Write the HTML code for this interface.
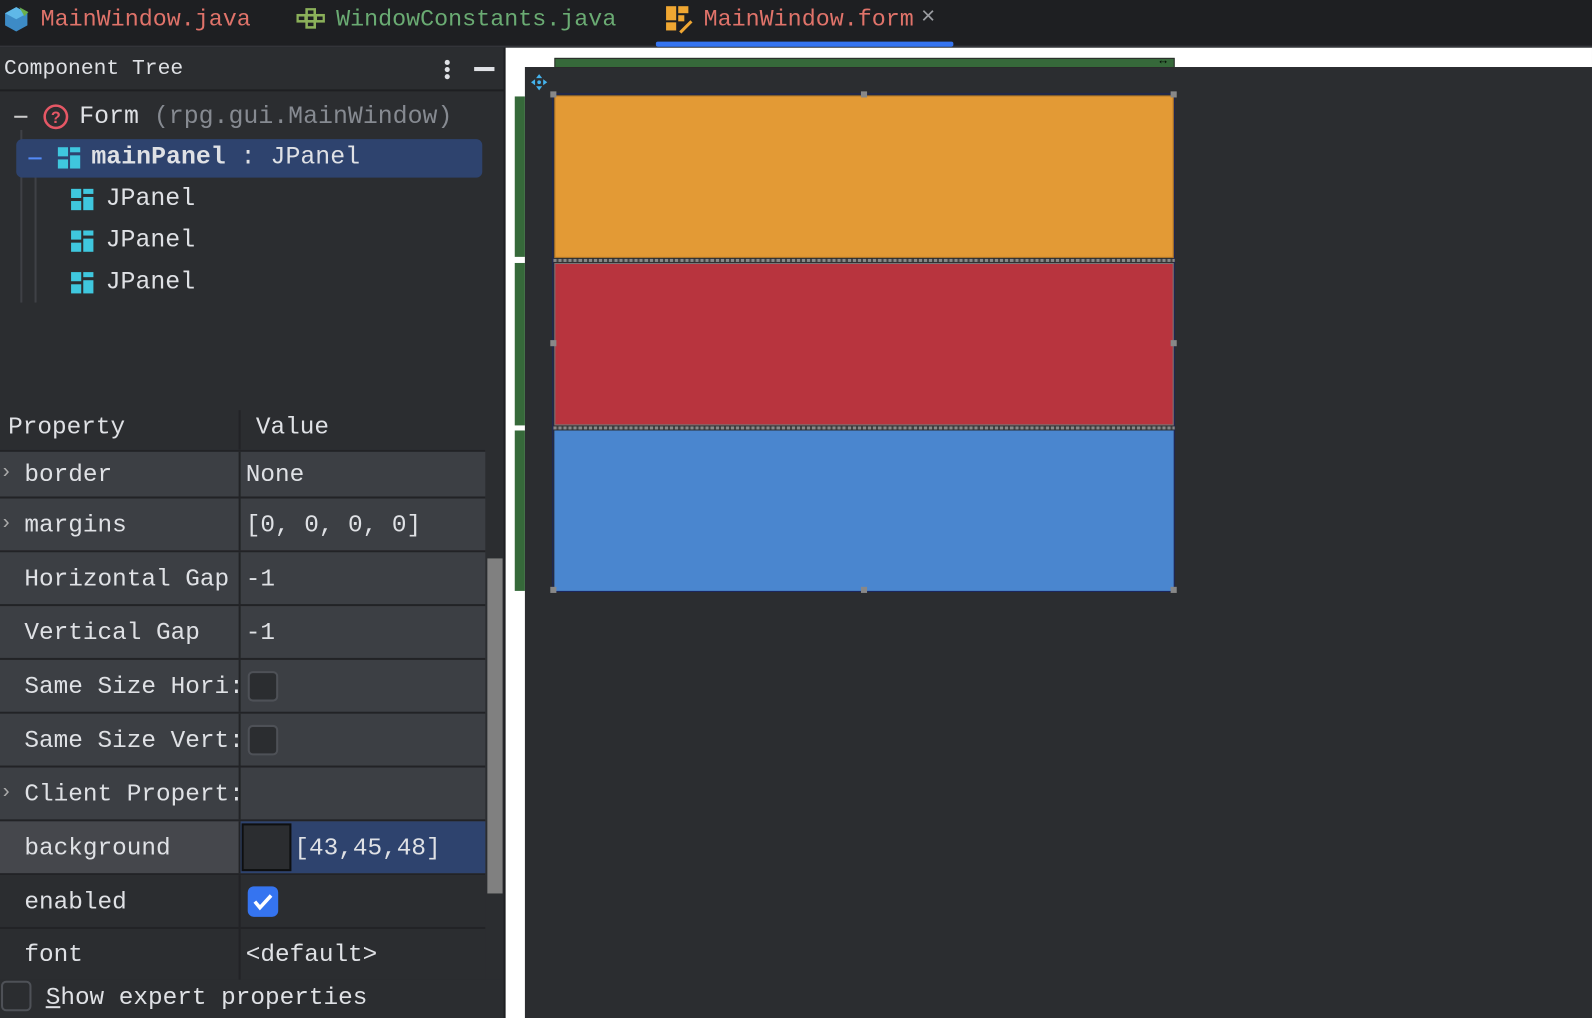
<!DOCTYPE html>
<html><head><style>
*{margin:0;padding:0;box-sizing:border-box}
html,body{width:1592px;height:1018px;overflow:hidden;background:#2b2d30}
#w{width:1568px;height:1003px;position:relative;transform:scale(1.0153);transform-origin:0 0;font-family:"Liberation Mono",monospace;color:#dfe1e5}
.a{position:absolute}
.t{white-space:pre}
.row{position:absolute;left:0;width:478px;border-bottom:2px solid #222326}
.row .k{position:absolute;left:24px;max-width:211px;overflow:hidden;white-space:pre;font-size:24px;top:50%;transform:translateY(-46%)}
.row .v{position:absolute;left:242px;font-size:24px;top:50%;transform:translateY(-46%)}
.row .div{position:absolute;left:235px;top:0;bottom:0;width:2px;background:#222326}
.row .ar{position:absolute;left:0;top:50%;transform:translateY(-55%);font-size:20px;color:#aaa}
.cb{position:absolute;left:244px;width:30px;height:30px;border:2px solid #4e5157;border-radius:5px;background:#2b2d30;top:50%;transform:translateY(-50%)}
</style></head><body><div id="w">
<div class="a" style="left:0;top:0;width:1568px;height:46px;background:#1e1f22;border-bottom:1px solid #393b40"></div>
<svg class="a" style="left:2px;top:4px" width="28" height="28" viewBox="0 0 28 28"><path d="M14 3 L25 9 L25 21 L14 27 L3 21 L3 9 Z" fill="#3d8bc6"/><path d="M14 3 L25 9 L14 15 L3 9Z" fill="#5fb8e8"/><path d="M17 3 L26 8 L22 12Z" fill="#6ab04c"/></svg>
<div class="a t" style="left:40px;top:6px;font-size:23px;color:#e0736a">MainWindow.java</div>
<svg class="a" style="left:292px;top:8px" width="28" height="22" viewBox="0 0 28 22"><g fill="none" stroke="#8bb05a" stroke-width="2.5"><rect x="10" y="1" width="8" height="6"/><rect x="1" y="7" width="8" height="6"/><rect x="10" y="7" width="8" height="6"/><rect x="19" y="7" width="8" height="6"/><rect x="10" y="13" width="8" height="6"/></g></svg>
<div class="a t" style="left:331px;top:6px;font-size:23px;color:#6aab73">WindowConstants.java</div>
<svg class="a" style="left:656px;top:6px" width="28" height="28" viewBox="0 0 28 28"><rect x="0" y="0" width="10" height="14" fill="#f0a732"/><rect x="12" y="0" width="10" height="7" fill="#f0a732"/><rect x="0" y="16" width="10" height="8" fill="#f0a732"/><rect x="12" y="9" width="6" height="6" fill="#f0a732"/><path d="M14 26 L25 15" stroke="#f0a732" stroke-width="3"/></svg>
<div class="a t" style="left:693px;top:6px;font-size:23px;color:#e0736a">MainWindow.form</div>
<div class="a" style="left:907px;top:4px;font-size:24px;color:#9a9ca1">×</div>
<div class="a" style="left:646px;top:41px;width:293px;height:5px;background:#3574f0;border-radius:2px"></div>

<div class="a" style="left:0;top:47px;width:498px;height:971px;background:#2b2d30;border-right:2px solid #1e1f22"></div>
<div class="a t" style="left:4px;top:57px;font-size:21px;color:#dfe1e5">Component Tree</div>
<div class="a" style="left:438px;top:59px;width:5px;height:5px;border-radius:3px;background:#dfe1e5;box-shadow:0 7px 0 #dfe1e5,0 14px 0 #dfe1e5"></div>
<div class="a" style="left:467px;top:66px;width:20px;height:4px;background:#dfe1e5"></div>
<div class="a" style="left:0;top:88px;width:496px;height:2px;background:#1e1f22"></div>
<div class="a" style="left:14px;top:114px;width:13px;height:2px;background:#ccc"></div>
<div class="a" style="left:20px;top:128px;width:2px;height:170px;background:#3f4146"></div>
<div class="a" style="left:34px;top:170px;width:2px;height:128px;background:#3f4146"></div>
<svg class="a" style="left:42px;top:102px" width="26" height="26"><circle cx="13" cy="13" r="11" fill="none" stroke="#e55765" stroke-width="2.5"/><text x="13" y="19" text-anchor="middle" font-size="16" font-family="Liberation Sans" fill="#e55765" font-weight="bold">?</text></svg>
<div class="a t" style="left:78px;top:102px;font-size:24.5px">Form <span style="color:#868a91">(rpg.gui.MainWindow)</span></div>
<div class="a" style="left:16px;top:137px;width:459px;height:38px;background:#2e436e;border-radius:6px"></div>
<div class="a" style="left:28px;top:155px;width:13px;height:2px;background:#548af7"></div>
<div class="a t" style="left:90px;top:142px;font-size:24.5px"><b>mainPanel</b> : JPanel</div>
<div class="a t" style="left:104px;top:183px;font-size:24.5px">JPanel</div>
<div class="a t" style="left:104px;top:224px;font-size:24.5px">JPanel</div>
<div class="a t" style="left:104px;top:265px;font-size:24.5px">JPanel</div>
<svg class="a" style="left:56px;top:144px" width="24" height="24"><g fill="#3fc7de"><rect x="1" y="1" width="10" height="9"/><rect x="1" y="13" width="10" height="9"/><rect x="13" y="1" width="10" height="5"/><rect x="13" y="9" width="10" height="13"/></g></svg>
<svg class="a" style="left:69px;top:185px" width="24" height="24"><g fill="#3fc7de"><rect x="1" y="1" width="10" height="9"/><rect x="1" y="13" width="10" height="9"/><rect x="13" y="1" width="10" height="5"/><rect x="13" y="9" width="10" height="13"/></g></svg>
<svg class="a" style="left:69px;top:226px" width="24" height="24"><g fill="#3fc7de"><rect x="1" y="1" width="10" height="9"/><rect x="1" y="13" width="10" height="9"/><rect x="13" y="1" width="10" height="5"/><rect x="13" y="9" width="10" height="13"/></g></svg>
<svg class="a" style="left:69px;top:267px" width="24" height="24"><g fill="#3fc7de"><rect x="1" y="1" width="10" height="9"/><rect x="1" y="13" width="10" height="9"/><rect x="13" y="1" width="10" height="5"/><rect x="13" y="9" width="10" height="13"/></g></svg>

<div class="a" style="left:235px;top:404px;width:2px;height:40px;background:#222326"></div>
<div class="a t" style="left:8px;top:408px;font-size:24px">Property</div>
<div class="a t" style="left:252px;top:408px;font-size:24px">Value</div>
<div class="row" style="top:443px;height:48px;background:#3c3f44;border-top:2px solid #222326"><div class="div"></div><span class="ar">›</span><span class="k">border</span><span class="v">None</span></div>
<div class="row" style="top:491px;height:53px;background:#3c3f44"><div class="div"></div><span class="ar">›</span><span class="k">margins</span><span class="v">[0, 0, 0, 0]</span></div>
<div class="row" style="top:544px;height:53px;background:#3c3f44"><div class="div"></div><span class="k">Horizontal Gap</span><span class="v">-1</span></div>
<div class="row" style="top:597px;height:53px;background:#3c3f44"><div class="div"></div><span class="k">Vertical Gap</span><span class="v">-1</span></div>
<div class="row" style="top:650px;height:53px;background:#3c3f44"><div class="div"></div><span class="k">Same Size Hori:</span><div class="cb"></div></div>
<div class="row" style="top:703px;height:53px;background:#3c3f44"><div class="div"></div><span class="k">Same Size Vert:</span><div class="cb"></div></div>
<div class="row" style="top:756px;height:53px;background:#3c3f44"><div class="div"></div><span class="ar">›</span><span class="k">Client Propert:</span></div>
<div class="row" style="top:809px;height:53px;background:#45474c"><div class="div"></div><span class="k">background</span>
<div class="a" style="left:237px;top:0;width:241px;height:51px;background:#2e436e"></div>
<div class="a" style="left:238px;top:2px;width:49px;height:47px;background:#2b2d30;border:2px solid #0e0f10"></div>
<span class="v" style="left:290px">[43,45,48]</span></div>
<div class="row" style="top:862px;height:53px;background:#2b2d30"><div class="div"></div><span class="k">enabled</span>
<div class="a" style="left:244px;top:11px;width:30px;height:30px;border-radius:6px;background:#3574f0"><svg width="30" height="30"><path d="M7 15 L12 21 L23 9" fill="none" stroke="#fff" stroke-width="3.5"/></svg></div></div>
<div class="row" style="top:915px;height:50px;background:#2b2d30;border-bottom:none"><div class="div"></div><span class="k">font</span><span class="v">&lt;default&gt;</span></div>
<div class="a" style="left:0;top:965px;width:496px;height:53px;background:#2b2d30"></div>
<div class="a" style="left:1px;top:966px;width:30px;height:30px;border:2px solid #4e5157;border-radius:5px"></div>
<div class="a t" style="left:45px;top:970px;font-size:24px"><u>S</u>how expert properties</div>
<div class="a" style="left:480px;top:550px;width:15px;height:330px;background:#808080"></div>

<div class="a" style="left:498px;top:47px;width:1070px;height:971px;background:#fff"></div>
<div class="a" style="left:517px;top:66px;width:1051px;height:952px;background:#2b2d30"></div>
<div class="a" style="left:546px;top:57px;width:611px;height:10px;background:#36693a;border:1px solid #2a2a2a"></div>
<div class="a" style="left:1142px;top:53px;font-size:12px;color:#000">↔</div>
<div class="a" style="left:507px;top:95px;width:10px;height:158px;background:#36693a"></div>
<div class="a" style="left:507px;top:259px;width:10px;height:160px;background:#36693a"></div>
<div class="a" style="left:507px;top:424px;width:10px;height:158px;background:#36693a"></div>
<svg class="a" style="left:522px;top:72px" width="18" height="18"><g fill="#44b3ee"><path d="M9 1 L12 5 L6 5Z"/><path d="M9 17 L12 13 L6 13Z"/><path d="M1 9 L5 6 L5 12Z"/><path d="M17 9 L13 6 L13 12Z"/><circle cx="9" cy="9" r="1.8"/></g></svg>
<div class="a" style="left:544px;top:92px;width:613px;height:491px;border:1px solid #1b2560"></div>
<div class="a" style="left:546px;top:94px;width:610px;height:160px;background:#e39a35;border:1px solid #b07628"></div>
<div class="a" style="left:545px;top:255px;width:612px;height:3px;background:repeating-linear-gradient(90deg,#888 0 3px,#444 3px 5px)"></div>
<div class="a" style="left:546px;top:259px;width:610px;height:160px;background:#b8343e;border:1px solid #777"></div>
<div class="a" style="left:545px;top:420px;width:612px;height:3px;background:repeating-linear-gradient(90deg,#888 0 3px,#444 3px 5px)"></div>
<div class="a" style="left:546px;top:424px;width:610px;height:158px;background:#4a86cf"></div>
<div class="a" style="left:542px;top:90px;width:6px;height:6px;background:#888"></div>
<div class="a" style="left:848px;top:90px;width:6px;height:6px;background:#888"></div>
<div class="a" style="left:1153px;top:90px;width:6px;height:6px;background:#888"></div>
<div class="a" style="left:542px;top:335px;width:6px;height:6px;background:#888"></div>
<div class="a" style="left:1153px;top:335px;width:6px;height:6px;background:#888"></div>
<div class="a" style="left:542px;top:578px;width:6px;height:6px;background:#888"></div>
<div class="a" style="left:848px;top:578px;width:6px;height:6px;background:#888"></div>
<div class="a" style="left:1153px;top:578px;width:6px;height:6px;background:#888"></div>
</div></body></html>
